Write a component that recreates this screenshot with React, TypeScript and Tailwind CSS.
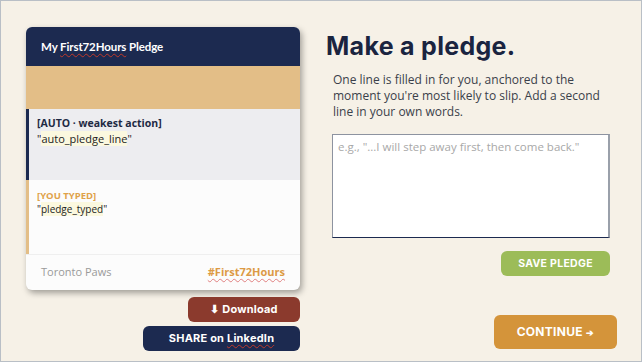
export default function App() {
  return (
    <div className="w-[642px] h-[362px] overflow-hidden border border-[#b9bfc6] bg-[#f6f1e7] flex font-['Open_Sans',sans-serif]">
      {/* left column: pledge card + share buttons */}
      <div className="w-[299px] shrink-0 pl-[25px] pt-[26px] flex flex-col">
        <div className="w-[274px] rounded-[6px] overflow-hidden bg-[#fcfcfc] shadow-[2px_3px_6px_rgba(0,0,0,0.35)]">
          <div className="h-[39px] bg-[#1c2a50] flex items-center px-[15px]">
            <span className="text-white text-[11.5px] font-bold font-['Lato',sans-serif] tracking-[-0.1px]">
              My <span className="underline decoration-wavy decoration-[#c0392b] decoration-1 underline-offset-2">First72Hours</span> Pledge
            </span>
          </div>
          <div className="h-[43px] bg-[#e3be87]" />
          <div className="h-[71px] bg-[#ededf0] border-l-[3px] border-[#1c2a50] pl-[8px] pt-[7px]">
            <div className="text-[10.5px] font-bold text-[#1e2a44] leading-[15px]">[AUTO · weakest action]</div>
            <div className="text-[11px] text-[#222] leading-[15px]">
              "<span className="bg-[#fbf8df]">auto_pledge_line</span>"
            </div>
          </div>
          <div className="h-[74px] bg-[#fcfcfc] border-l-[3px] border-[#e3be87] pl-[8px] pt-[9px]">
            <div className="text-[9.5px] font-bold text-[#e0a24a] leading-[13px]">[YOU TYPED]</div>
            <div className="text-[10px] text-[#222] leading-[14px]">
              "<span className="bg-[#fbf8df]">pledge_typed</span>"
            </div>
          </div>
          <div className="h-[36px] border-t border-[#efefef] flex items-center justify-between pl-[15px] pr-[15px]">
            <span className="text-[11px] text-[#9a9a9a]">Toronto Paws</span>
            <span className="text-[11px] font-bold text-[#dc9a45] underline decoration-wavy decoration-[#e08080] decoration-1 underline-offset-2">#First72Hours</span>
          </div>
        </div>
        <div className="flex flex-col items-end gap-[4px] mt-[7px] w-[274px]">
          <button className="w-[112px] h-[25px] rounded-[6px] bg-[#8b3a2d] text-white text-[11px] font-bold font-['Inter',sans-serif] tracking-[0.2px]">
            ⬇ Download
          </button>
          <button className="w-[157px] h-[25px] rounded-[6px] bg-[#1c2a50] text-white text-[11px] font-bold font-['Inter',sans-serif] tracking-[0.2px]">
            SHARE on <span className="underline decoration-wavy decoration-[#c0392b] decoration-1 underline-offset-2">LinkedIn</span>
          </button>
        </div>
      </div>

      {/* right column: form */}
      <div className="flex-1 pl-[26px] pt-[30px] flex flex-col">
        <h1 className="text-[25px] leading-[30px] font-bold text-[#1a2440] font-['Inter',sans-serif] tracking-[0.3px]">
          Make a pledge.
        </h1>
        <p className="mt-[11px] ml-[7px] w-[280px] text-[12px] leading-[16px] text-[#3a3f4a]">
          One line is filled in for you, anchored to the moment you're most likely to slip. Add a second line in your own words.
        </p>
        <textarea
          className="mt-[14px] ml-[6px] w-[278px] h-[104px] bg-white border border-[#8d93a0] border-r-2 border-r-[#9aa0aa] border-b-[#1c2a50] px-[5px] py-[4px] text-[11.5px] leading-[16px] resize-none outline-none placeholder:text-[#a8a8a8]"
          placeholder={'e.g., "...I will step away first, then come back."'}
        />
        <div className="w-[284px] flex justify-end mt-[13px]">
          <button className="w-[109px] h-[25px] rounded-[6px] bg-[#9cbc58] text-white text-[10.5px] font-bold font-['Inter',sans-serif] tracking-[0.3px]">
            SAVE PLEDGE
          </button>
        </div>
        <div className="w-[291px] flex justify-end mt-[39px]">
          <button className="w-[123px] h-[34px] rounded-[6px] bg-[#d4943a] text-white text-[12px] font-bold font-['Inter',sans-serif] tracking-[0.3px]">
            CONTINUE <span className="text-[9px]">➔</span>
          </button>
        </div>
      </div>
    </div>
  );
}
